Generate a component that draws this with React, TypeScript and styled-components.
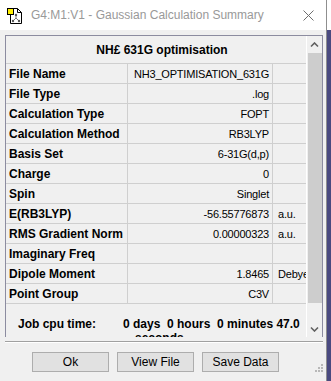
import React from 'react'
import styled, { createGlobalStyle } from 'styled-components'

const GlobalStyle = createGlobalStyle`
  html, body {
    margin: 0;
    padding: 0;
  }
  body {
    width: 331px;
    height: 381px;
    overflow: hidden;
    font-family: "Liberation Sans", Arial, sans-serif;
    color: #000;
  }
`

const Screen = styled.div`
  display: flex;
  height: 381px;
  background: linear-gradient(#fff 0 30px, #4a4a80 30px);
`

const Window = styled.div`
  width: 326px;
  display: flex;
  flex-direction: column;
  background: #f0f0f0;
  border-right: 1px solid #8f8f8f;
`

const TitleBar = styled.div`
  height: 30px;
  background: #fff;
  display: flex;
  align-items: center;
  padding-left: 7px;
`

const Caption = styled.span`
  margin-left: 8px;
  font-size: 12px;
  color: #999;
  flex: 1;
`

const CloseButton = styled.div`
  width: 30px;
  display: flex;
  justify-content: center;
  margin-right: 3px;
`

const Panel = styled.div`
  margin: 5px 0 0 5px;
  width: 318px;
  height: 302px;
  box-sizing: border-box;
  border: 1px solid #8c8ca0;
  border-bottom: none;
  display: flex;
`

const Viewport = styled.div`
  width: 300px;
  overflow: hidden;
`

const Heading = styled.div`
  height: 27px;
  border-bottom: 1px solid #cfcfcf;
  display: flex;
  align-items: center;
  justify-content: center;
  padding-left: 12px;
  font-size: 12px;
  font-weight: bold;
`

const Row = styled.div`
  display: grid;
  grid-template-columns: 122px 145px 1fr;
  height: 19px;
  border-bottom: 1px solid #cfcfcf;
`

const Cell = styled.div<{ $align?: 'left' | 'right' }>`
  display: flex;
  align-items: center;
  justify-content: ${p => (p.$align === 'right' ? 'flex-end' : 'flex-start')};
  border-right: 1px solid #cfcfcf;
  overflow: hidden;
  white-space: nowrap;
`

const Label = styled(Cell)`
  padding-left: 3px;
  font-size: 12px;
  font-weight: bold;
`

const Value = styled(Cell)`
  padding-right: 3px;
  font-size: 11px;
  letter-spacing: -0.2px;
`

const Unit = styled(Cell)`
  border-right: none;
  padding-left: 5px;
  font-size: 11px;
  letter-spacing: -0.2px;
`

const JobRow = styled.div`
  display: flex;
  padding: 13px 0 0 12px;
  font-size: 12px;
  font-weight: bold;
  line-height: 14px;
`

const JobLabel = styled.div`
  width: 105px;
`

const JobValue = styled.div`
  white-space: pre;
`

const Wrapped = styled.span`
  display: block;
  padding-left: 12px;
`

const ScrollBar = styled.div`
  width: 15px;
  border-left: 1px solid #fff;
  display: flex;
  flex-direction: column;
`

const ScrollArrow = styled.div`
  height: 17px;
  display: flex;
  align-items: center;
  justify-content: center;
`

const Track = styled.div`
  flex: 1;
  display: flex;
  flex-direction: column;
`

const Thumb = styled.div`
  height: 250px;
  margin-left: 1px;
  background: #cdcdcd;
`

const Separator = styled.div`
  margin: 4px 0 0 5px;
  width: 318px;
  border-top: 1px solid #a0a0a0;
  border-bottom: 1px solid #fff;
`

const ButtonRow = styled.div`
  display: flex;
  gap: 8px;
  margin-top: 9px;
  padding-left: 32px;
  padding-right: 3px;
`

const Button = styled.button`
  width: 77px;
  height: 20px;
  padding: 0;
  background: #e1e1e1;
  border: 1px solid #adadad;
  font-family: "Liberation Sans", Arial, sans-serif;
  font-size: 12px;
  color: #000;
`

const Grip = styled.div`
  margin-left: auto;
  align-self: flex-end;
  display: flex;
`

const rows = [
  { label: 'File Name', value: 'NH3_OPTIMISATION_631G', unit: '' },
  { label: 'File Type', value: '.log', unit: '' },
  { label: 'Calculation Type', value: 'FOPT', unit: '' },
  { label: 'Calculation Method', value: 'RB3LYP', unit: '' },
  { label: 'Basis Set', value: '6-31G(d,p)', unit: '' },
  { label: 'Charge', value: '0', unit: '' },
  { label: 'Spin', value: 'Singlet', unit: '' },
  { label: 'E(RB3LYP)', value: '-56.55776873', unit: 'a.u.' },
  { label: 'RMS Gradient Norm', value: '0.00000323', unit: 'a.u.' },
  { label: 'Imaginary Freq', value: '', unit: '' },
  { label: 'Dipole Moment', value: '1.8465', unit: 'Debye' },
  { label: 'Point Group', value: 'C3V', unit: '' },
]

const AppIcon = () => (
  <svg width="16" height="17" viewBox="0 0 16 17">
    <path d="M3.5 1.5 H10.5 L14.5 5.5 V16.5 H3.5 Z" fill="#fff" stroke="#000" />
    <path d="M10.5 1.5 V5.5 H14.5" fill="none" stroke="#000" />
    <rect x="0.5" y="1.5" width="6" height="6" fill="#ffef00" stroke="#000" />
    <path d="M9 8 V11 L6 14 M9 11 L12 14" stroke="#7a7a7a" strokeWidth="1" fill="none" />
    <circle cx="9" cy="8" r="1.2" fill="#555" />
    <circle cx="6" cy="14" r="1.2" fill="#555" />
    <circle cx="12" cy="14" r="1.2" fill="#555" />
  </svg>
)

const Chevron = ({ down }: { down?: boolean }) => (
  <svg width="9" height="6" viewBox="0 0 9 6">
    <path
      d={down ? 'M1 1.5 L4.5 5 L8 1.5' : 'M1 4.5 L4.5 1 L8 4.5'}
      fill="none"
      stroke="#606060"
      strokeWidth="1.6"
    />
  </svg>
)

const GripDots = () => (
  <svg width="8" height="8" viewBox="0 0 8 8">
    {[
      [6, 0],
      [3, 3],
      [6, 3],
      [0, 6],
      [3, 6],
      [6, 6],
    ].map(([x, y]) => (
      <rect key={`${x}-${y}`} x={x} y={y} width="2" height="2" fill="#b8b8b8" />
    ))}
  </svg>
)

const App: React.FC = () => {
  return (
    <>
      <GlobalStyle />
      <Screen>
        <Window>
          <TitleBar>
            <AppIcon />
            <Caption>G4:M1:V1 - Gaussian Calculation Summary</Caption>
            <CloseButton>
              <svg width="11" height="11" viewBox="0 0 11 11">
                <path d="M0.5 0.5 L10.5 10.5 M10.5 0.5 L0.5 10.5" stroke="#6e6e6e" strokeWidth="1" />
              </svg>
            </CloseButton>
          </TitleBar>

          <Panel>
            <Viewport>
              <Heading>NH£ 631G optimisation</Heading>
              {rows.map(row => (
                <Row key={row.label}>
                  <Label>{row.label}</Label>
                  <Value $align="right">{row.value}</Value>
                  <Unit>{row.unit}</Unit>
                </Row>
              ))}
              <JobRow>
                <JobLabel>Job cpu time:</JobLabel>
                <JobValue>
                  {'0 days  0 hours  0 minutes 47.0'}
                  <Wrapped>seconds</Wrapped>
                </JobValue>
              </JobRow>
            </Viewport>
            <ScrollBar>
              <ScrollArrow>
                <Chevron />
              </ScrollArrow>
              <Track>
                <Thumb />
              </Track>
              <ScrollArrow>
                <Chevron down />
              </ScrollArrow>
            </ScrollBar>
          </Panel>

          <Separator />

          <ButtonRow>
            <Button>Ok</Button>
            <Button>View File</Button>
            <Button>Save Data</Button>
            <Grip>
              <GripDots />
            </Grip>
          </ButtonRow>
        </Window>
      </Screen>
    </>
  )
}

export default App
